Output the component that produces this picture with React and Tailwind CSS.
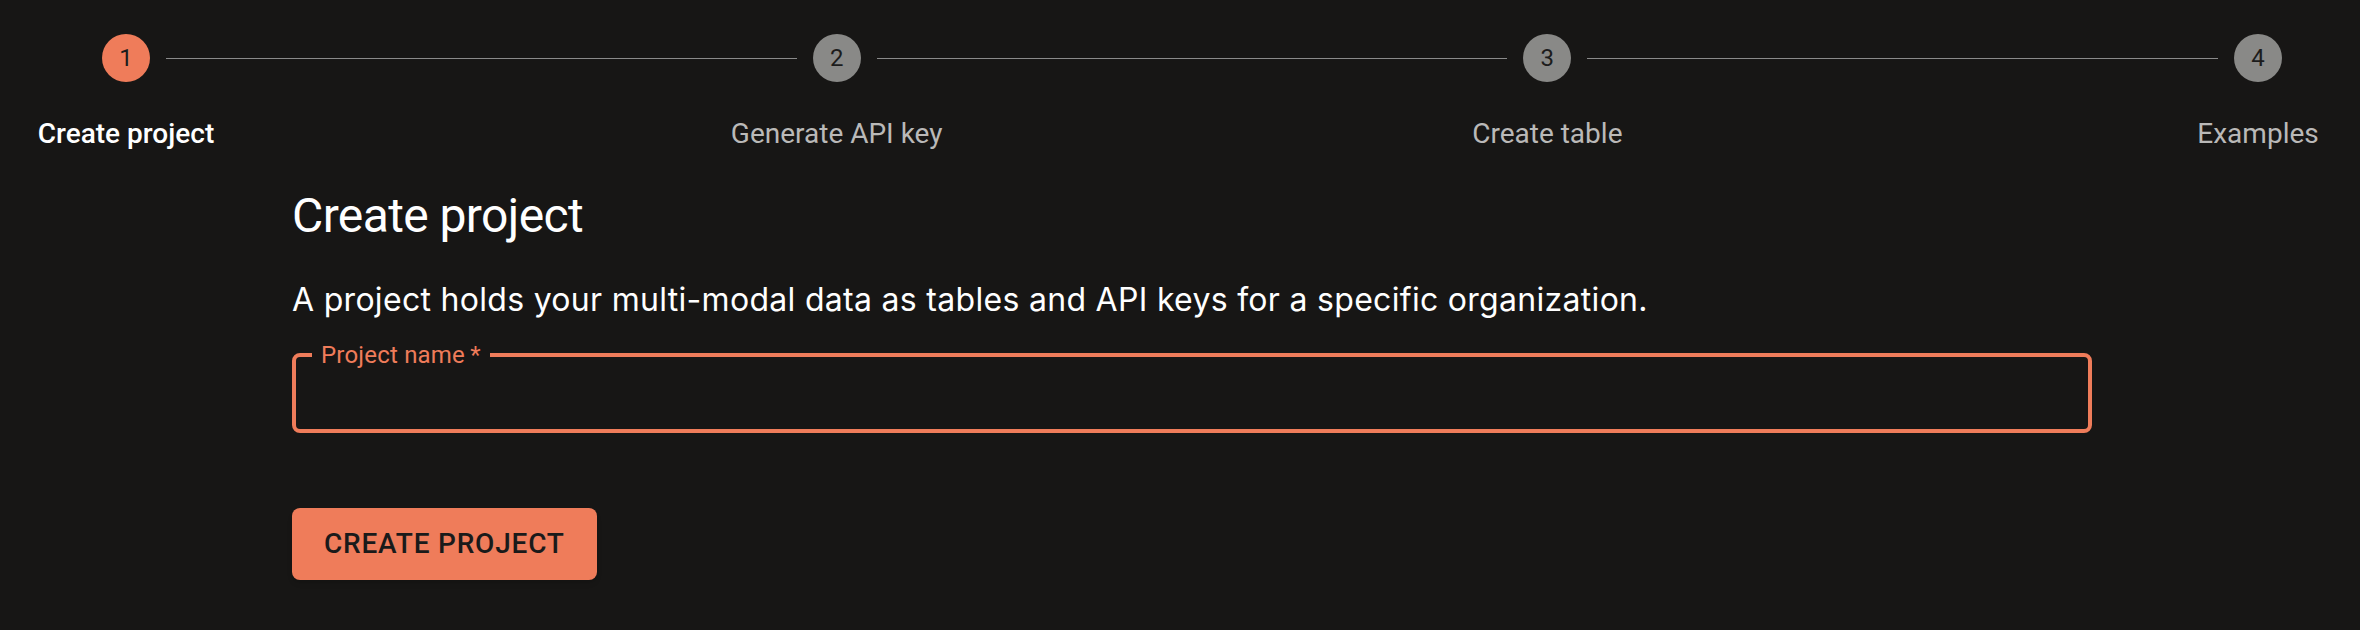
const steps = ["Create project", "Generate API key", "Create table", "Examples"];

const Step = ({ index, label, active }) => {
  return (
    <div className="flex w-12 shrink-0 flex-col items-center">
      <div
        className={
          active
            ? "flex h-12 w-12 items-center justify-center rounded-full bg-[#ef7c5a] text-[24px] text-[#1c1c1c]"
            : "flex h-12 w-12 items-center justify-center rounded-full bg-[#898987] text-[24px] text-[#1c1c1c]"
        }
      >
        {index}
      </div>
      <div
        className={
          active
            ? "mt-8 whitespace-nowrap text-[28px] leading-[40px] font-medium text-white"
            : "mt-8 whitespace-nowrap text-[28px] leading-[40px] text-[#bab9b8]"
        }
      >
        {label}
      </div>
    </div>
  );
};

const Stepper = () => {
  return (
    <div className="flex items-start pl-[102px] pr-[78px] pt-[34px]">
      {steps.map((label, i) => (
        <div key={label} className={i < steps.length - 1 ? "flex flex-1 items-start" : "flex items-start"}>
          <Step index={i + 1} label={label} active={i === 0} />
          {i < steps.length - 1 && (
            <div className="mx-4 mt-[24px] h-px flex-1 bg-[#8a8a8a]" />
          )}
        </div>
      ))}
    </div>
  );
};

export default function App() {
  return (
    <div className="min-h-[630px] w-full bg-[#171615] font-['Roboto',sans-serif] text-white">
      <Stepper />
      <div className="ml-[292px] w-[1800px]">
        <h1 className="mt-[30px] text-[48px] leading-[64px] font-normal tracking-[-0.6px]">Create project</h1>
        <p className="mt-[28px] font-['Inter',sans-serif] text-[32px] leading-[48px] tracking-[0.3px]">
          A project holds your multi-modal data as tables and API keys for a specific organization.
        </p>
        {/* outlined text field, focused */}
        <fieldset className="mt-4 rounded-lg border-4 border-[#ef7c5a] px-4">
          <legend className="px-[9px] text-[24px] leading-[30px] tracking-[0.2px] text-[#ef7c5a]">
            Project name&thinsp;*
          </legend>
          <input
            type="text"
            className="block h-[59px] w-full bg-transparent text-[32px] text-white outline-none"
          />
        </fieldset>
        <button
          type="button"
          className="mt-[75px] h-[72px] rounded-lg bg-[#ef7c5a] px-8 text-[28px] font-medium uppercase tracking-[0.8px] text-[#1a1a1a] shadow-md"
        >
          Create project
        </button>
      </div>
    </div>
  );
}
